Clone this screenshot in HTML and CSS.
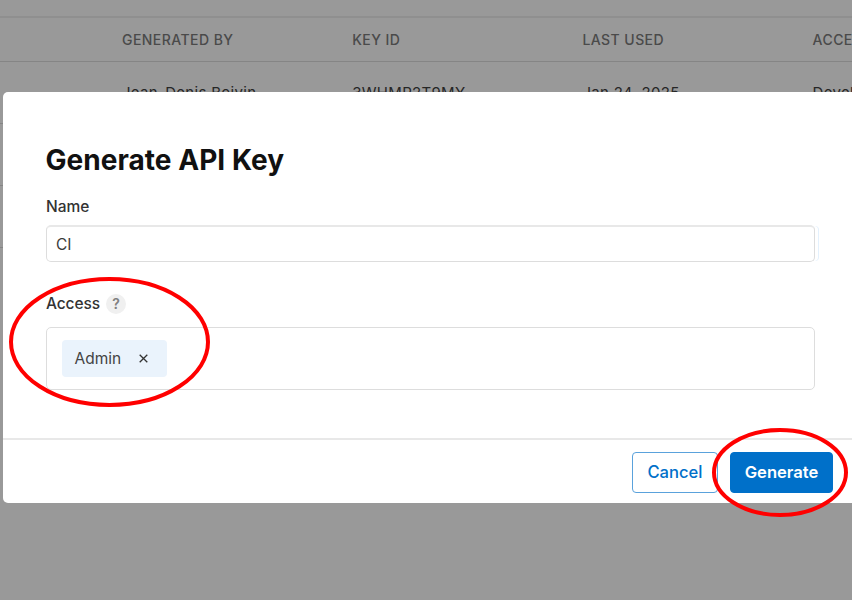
FILE: index.html
```html
<!DOCTYPE html>
<html lang="en">
<head>
<meta charset="utf-8">
<title>Generate API Key</title>
<link rel="stylesheet" href="styles.css">
</head>
<body>
<div class="page">
  <div class="row head"><span>GENERATED BY</span><span>KEY ID</span><span>LAST USED</span><span>ACCESS</span></div>
  <div class="row data"><span>Jean-Denis Boivin</span><span>3WHMP2T9MY</span><span>Jan 24, 2025</span><span>Developer</span></div>
  <div class="row"></div>
  <div class="row"></div>
</div>
<div class="modal">
  <div class="body">
    <h1>Generate API Key</h1>
    <div class="label">Name</div>
    <div class="field name-field">CI</div>
    <div class="label access-label"><span>Access</span><span class="help">?</span></div>
    <div class="field access-field">
      <div class="tag"><span>Admin</span><svg width="9" height="9" viewBox="0 0 9 9"><path d="M.7.7l7.6 7.6M8.3.7L.7 8.3" stroke="#333" stroke-width="1.3" fill="none"/></svg></div>
    </div>
  </div>
  <div class="footer">
    <button class="btn cancel"><span>Cancel</span></button>
    <button class="btn generate"><span>Generate</span></button>
  </div>
</div>
<svg class="marks" width="852" height="600" viewBox="0 0 852 600" fill="none" stroke="#f00" stroke-width="4">
  <ellipse cx="109.500" cy="342" rx="98.500" ry="63"/>
  <ellipse cx="780" cy="472.500" rx="66" ry="42.500"/>
</svg>
</body>
</html>
```
FILE: styles.css
```css
* { box-sizing: border-box; }
body {
  margin: 0;
  width: 852px;
  height: 600px;
  overflow: hidden;
  background: #999;
  font-family: Inter, sans-serif;
  position: relative;
}
.page { padding-top: 16px; width: 852px; }
.row {
  display: grid;
  grid-template-columns: 230.2px 230.2px 230.2px 1fr;
  padding-left: 122px;
  height: 62px;
  border-bottom: 1px solid #858585;
  align-items: center;
  white-space: nowrap;
}
.row span { min-width: 0; }
.head {
  height: 46px;
  border-top: 2px solid #8f8f8f;
  font-size: 14px;
  font-weight: 500;
  letter-spacing: .45px;
  color: #4a4a4a;
}
.data { font-size: 15px; letter-spacing: .3px; color: #262626; }
.modal {
  position: absolute;
  left: 3px;
  top: 92px;
  width: 849px;
  height: 411px;
  background: #fff;
  border-radius: 5px 0 0 5px;
}
.body { height: 346px; padding: 49px 0 0 43px; }
h1 {
  margin: 0 0 0 -.5px;
  font-size: 28px;
  line-height: 38px;
  font-weight: 700;
  letter-spacing: .04px;
  color: #111;
}
.label {
  display: flex;
  align-items: center;
  margin-top: 17px;
  height: 20px;
  font-size: 15.5px;
  font-weight: 500;
  color: #333;
}
.access-label { margin-top: 31.5px; letter-spacing: -.1px; }
.help {
  width: 20px;
  height: 20px;
  margin-left: 6px;
  border-radius: 50%;
  background: #f0f0f0;
  color: #808080;
  font-size: 14px;
  line-height: 20px;
  font-weight: 600;
  text-align: center;
}
.field {
  display: flex;
  align-items: center;
  width: 769px;
  border: 1px solid #ddd;
  border-radius: 5px;
  color: #3a3a3a;
  font-size: 15.5px;
}
.name-field {
  height: 37px;
  margin-top: 9px;
  padding: 1px 0 0 9px;
  border-top: 2px solid #e8e8e8;
  box-shadow: 4px 0 0 -1px #fff, 5px 0 0 -1px #e4f1fd;
}
.access-field { height: 63px; margin-top: 13.5px; padding-left: 15px; }
.tag {
  display: flex;
  align-items: center;
  width: 104.5px;
  height: 37px;
  padding-left: 12.5px;
  background: #eaf3fc;
  border-radius: 4px;
  color: #444;
}
.tag span { padding-bottom: 1px; }
.tag svg { margin-left: 18px; }
.footer {
  display: flex;
  height: 65px;
  padding: 11.5px 0 0 629px;
  border-top: 2px solid #e8e8e8;
}
.btn {
  display: flex;
  align-items: center;
  justify-content: center;
  height: 41px;
  padding: 0;
  border: 1px solid #5aa2dc;
  border-radius: 4px;
  background: #fff;
  color: #0070c9;
  font: 500 16.6px Inter, sans-serif;
}
.cancel { width: 86px; }
.generate {
  width: 103px;
  margin-left: 12px;
  border-color: #0070c9;
  background: #0070c9;
  color: #fff;
  font-weight: 600;
}
.marks { position: absolute; left: 0; top: 0; pointer-events: none; }
```
